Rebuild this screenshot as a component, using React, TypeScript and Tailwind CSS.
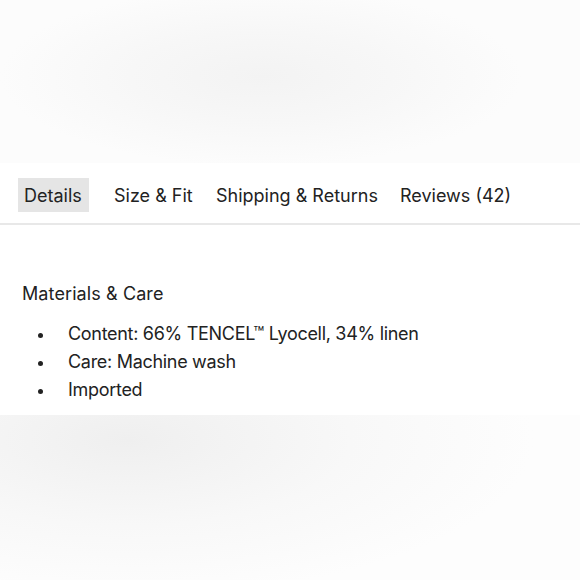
export default function App() {
  const tabs = [
    { t: "Details", w: "w-[90px]" },
    { t: "Size & Fit", w: "w-[102px]" },
    { t: "Shipping & Returns", w: "w-[184px]" },
    { t: "Reviews (42)", w: "" },
  ];
  return (
    <div className="w-[580px] h-[580px] overflow-hidden bg-white text-[#222] font-['Inter',sans-serif]">
      <div className="h-[163px] bg-[radial-gradient(ellipse_45%_55%_at_45%_47%,#f3f3f3,#f7f7f7_50%,#fcfcfc_100%)]" />
      <div className="h-[252px] bg-white">
        <div className="flex items-start h-[62px] pt-[15px] pl-[18px] border-b-2 border-[#e8e8e8]">
          {tabs.map((x, i) => (
            <div key={x.t} className={x.w}>
              <div
                className={
                  "inline-flex h-[34px] px-[6px] items-center text-[18px] " +
                  (i === 0 ? "bg-[#e5e5e5] w-[71px]" : "")
                }
              >
                {x.t}
              </div>
            </div>
          ))}
        </div>
        <div className="pl-[22px] pt-[55px]">
          <div className="text-[18px] leading-[28px] tracking-[0.1px]">Materials &amp; Care</div>
          <ul className="mt-[12px]">
            {[
              "Content: 66% TENCEL™ Lyocell, 34% linen",
              "Care: Machine wash",
              "Imported",
            ].map((s) => (
              <li key={s} className="flex items-center text-[18px] leading-[28px]">
                <span className="w-[46px] pl-[16px] flex items-center">
                  <span className="block w-[5px] h-[5px] rounded-full bg-[#222] mt-[3px]" />
                </span>
                <span className="tracking-[-0.3px]">{s}</span>
              </li>
            ))}
          </ul>
        </div>
      </div>
      <div className="h-[165px] bg-[radial-gradient(ellipse_70%_95%_at_22%_15%,#efefef,#f8f8f8_55%,#fdfdfd_100%)]" />
    </div>
  );
}
